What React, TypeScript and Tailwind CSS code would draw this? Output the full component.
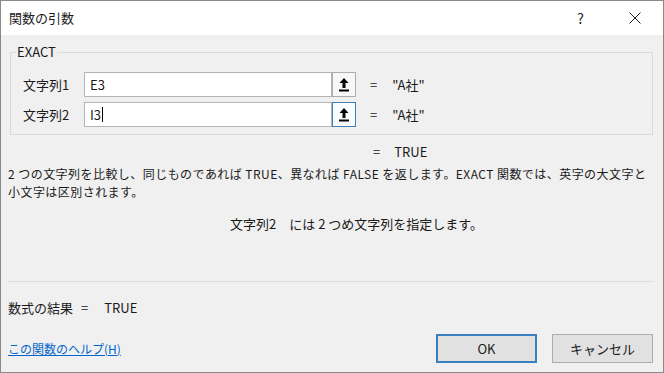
import React from "react";

const ArrowIcon = () => (
  <svg width="10" height="14" viewBox="0 0 10 14">
    <polygon points="5,0 9.5,5 6.5,5 6.5,10 3.5,10 3.5,5 0.5,5" fill="#000" />
    <rect x="0" y="11.5" width="10" height="2" fill="#000" />
  </svg>
);

const ArgRow = ({
  label,
  value,
  result,
  focused,
}: {
  label: string;
  value: string;
  result: string;
  focused?: boolean;
}) => (
  <div className="flex items-center h-[25px]">
    <div className="w-[73px] pl-[12px] text-[13px]">{label}</div>
    <div className="w-[248px] h-[25px] bg-white border border-[#b4b4b4] flex items-center pl-[5px] text-[13px]">
      {value}
      {focused && <span className="w-px h-[15px] bg-black ml-[1px]"></span>}
    </div>
    <div
      className={
        focused
          ? "w-[24px] h-[25px] border border-[#3d7fb6] bg-[#fbfcfd] flex items-center justify-center"
          : "w-[24px] h-[25px] border border-[#adadad] bg-[#f7f7f7] flex items-center justify-center"
      }
    >
      <ArrowIcon />
    </div>
    <span className="ml-[14px] text-[13px]">=</span>
    <span className="ml-[15px] text-[13px]">{result}</span>
  </div>
);

const App = () => {
  return (
    <div className="w-[664px] h-[373px] border border-[#8a8a8a] bg-[#f0f0f0] flex flex-col text-[#1a1a1a] font-['Noto_Sans_CJK_JP',sans-serif] overflow-hidden">
      <div className="h-[34px] bg-white flex items-center pl-[8px] text-[13px]">
        <span>関数の引数</span>
        <span className="ml-auto text-[14px]">?</span>
        <svg width="12" height="12" viewBox="0 0 12 12" className="ml-[45px] mr-[22px]">
          <path d="M0.5 0.5 L11.5 11.5 M11.5 0.5 L0.5 11.5" stroke="#222" strokeWidth="1" />
        </svg>
      </div>

      <div className="flex-1 flex flex-col pl-[7px] pr-[10px]">
        <fieldset className="ml-[2px] mt-[8px] w-[643px] border border-[#dadada] pt-[11px] pb-[7px]">
          <legend className="ml-[5px] px-[1px] text-[13px] leading-[18px]">EXACT</legend>
          <div className="flex flex-col gap-[5px]">
            <ArgRow label="文字列1" value="E3" result={'"A社"'} />
            <ArgRow label="文字列2" value="I3" result={'"A社"'} focused />
          </div>
        </fieldset>

        <div className="mt-[8px] pl-[365px] text-[13px] leading-[18px]">
          =<span className="ml-[14px]">TRUE</span>
        </div>

        <div className="mt-[4px] text-[12px] tracking-[0.45px] leading-[18px] whitespace-nowrap">
          2 つの文字列を比較し、同じものであれば TRUE、異なれば FALSE を返します。EXACT 関数では、英字の大文字と
          <br />
          小文字は区別されます。
        </div>

        <div className="mt-[14px] pl-[222px] text-[13px] leading-[18px]">
          文字列2　には 2 つめ文字列を指定します。
        </div>

        <div className="mt-[48px] h-px w-[645px] bg-[#dcdcdc]"></div>

        <div className="mt-[17px] text-[13px] leading-[18px]">
          数式の結果<span className="ml-[8px]">=</span>
          <span className="ml-[16px]">TRUE</span>
        </div>

        <div className="mt-[17px] flex items-center">
          <span className="text-[12px] text-[#0066cc] underline">この関数のヘルプ(H)</span>
          <button className="ml-auto w-[101px] h-[29px] border-2 border-[#3a7fc2] bg-[#e1e1e1] text-[13px]">
            OK
          </button>
          <button className="ml-[15px] w-[101px] h-[29px] border border-[#adadad] bg-[#e1e1e1] text-[13px]">
            キャンセル
          </button>
        </div>
      </div>
    </div>
  );
};

export default App;
